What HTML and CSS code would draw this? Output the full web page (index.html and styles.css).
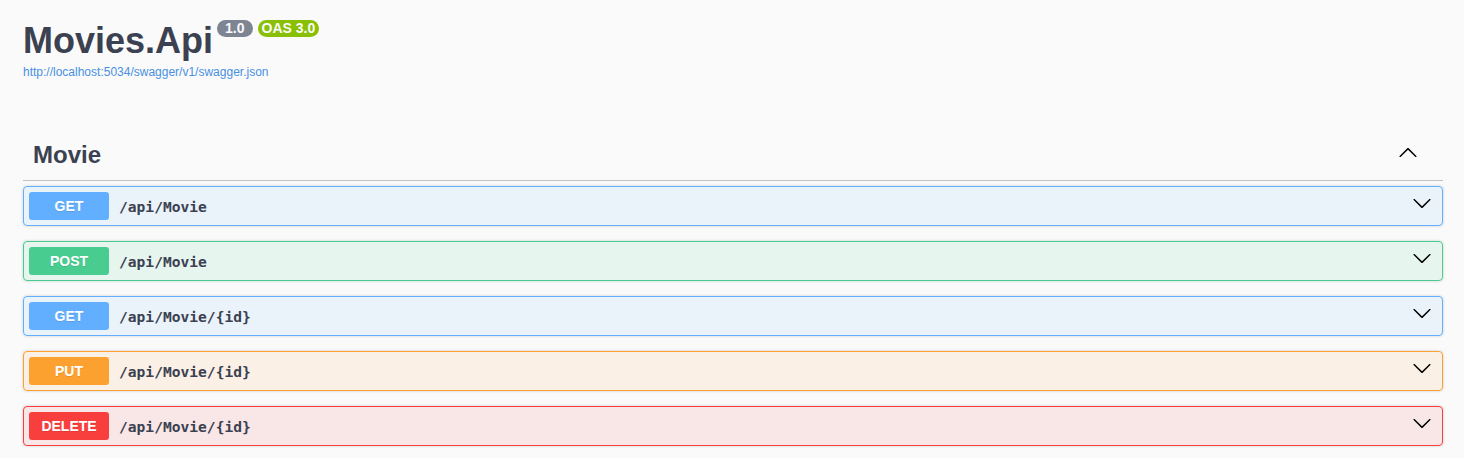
FILE: index.html
```html
<!DOCTYPE html>
<html lang="en">
<head>
<meta charset="utf-8">
<title>Movies.Api</title>
<link rel="stylesheet" href="styles.css">
</head>
<body>
<div class="wrapper">
  <header class="info">
    <h2 class="title">
      <span class="title-text">Movies.Api</span>
      <span class="badge badge-version">1.0</span>
      <span class="badge badge-oas">OAS 3.0</span>
    </h2>
    <a class="spec-link" href="#">http://localhost:5034/swagger/v1/swagger.json</a>
  </header>

  <section class="tag-section">
    <h3 class="tag-header">
      <span class="tag-name">Movie</span>
      <svg class="tag-arrow" width="20" height="20" viewBox="0 0 20 20" aria-hidden="true"><path d="M17.418 14.908c.272.268.709.268.979 0s.271-.701 0-.969l-7.908-7.83c-.27-.268-.707-.268-.979 0l-7.908 7.83c-.27.268-.27.701 0 .969.271.268.709.268.979 0L10 7.767l7.418 7.141z"/></svg>
    </h3>

    <div class="opblock opblock-get">
      <span class="method">GET</span>
      <span class="path">/api/Movie</span>
      <svg class="op-arrow" width="20" height="20" viewBox="0 0 20 20" aria-hidden="true"><path d="M17.418 6.109c.272-.268.709-.268.979 0s.271.701 0 .969l-7.908 7.83c-.27.268-.707.268-.979 0l-7.908-7.83c-.27-.268-.27-.701 0-.969.271-.268.709-.268.979 0L10 13.25l7.418-7.141z"/></svg>
    </div>
    <div class="opblock opblock-post">
      <span class="method">POST</span>
      <span class="path">/api/Movie</span>
      <svg class="op-arrow" width="20" height="20" viewBox="0 0 20 20" aria-hidden="true"><path d="M17.418 6.109c.272-.268.709-.268.979 0s.271.701 0 .969l-7.908 7.83c-.27.268-.707.268-.979 0l-7.908-7.83c-.27-.268-.27-.701 0-.969.271-.268.709-.268.979 0L10 13.25l7.418-7.141z"/></svg>
    </div>
    <div class="opblock opblock-get">
      <span class="method">GET</span>
      <span class="path">/api/Movie/{id}</span>
      <svg class="op-arrow" width="20" height="20" viewBox="0 0 20 20" aria-hidden="true"><path d="M17.418 6.109c.272-.268.709-.268.979 0s.271.701 0 .969l-7.908 7.83c-.27.268-.707.268-.979 0l-7.908-7.83c-.27-.268-.27-.701 0-.969.271-.268.709-.268.979 0L10 13.25l7.418-7.141z"/></svg>
    </div>
    <div class="opblock opblock-put">
      <span class="method">PUT</span>
      <span class="path">/api/Movie/{id}</span>
      <svg class="op-arrow" width="20" height="20" viewBox="0 0 20 20" aria-hidden="true"><path d="M17.418 6.109c.272-.268.709-.268.979 0s.271.701 0 .969l-7.908 7.83c-.27.268-.707.268-.979 0l-7.908-7.83c-.27-.268-.27-.701 0-.969.271-.268.709-.268.979 0L10 13.25l7.418-7.141z"/></svg>
    </div>
    <div class="opblock opblock-delete">
      <span class="method">DELETE</span>
      <span class="path">/api/Movie/{id}</span>
      <svg class="op-arrow" width="20" height="20" viewBox="0 0 20 20" aria-hidden="true"><path d="M17.418 6.109c.272-.268.709-.268.979 0s.271.701 0 .969l-7.908 7.83c-.27.268-.707.268-.979 0l-7.908-7.83c-.27-.268-.27-.701 0-.969.271-.268.709-.268.979 0L10 13.25l7.418-7.141z"/></svg>
    </div>
  </section>
</div>
</body>
</html>
```

FILE: styles.css
```css
html, body {
  margin: 0;
  padding: 0;
  background: #fafafa;
}

body {
  font-family: "Liberation Sans", Arial, sans-serif;
  color: #3b4151;
}

.wrapper {
  padding: 20px 21px 0 23px;
}

.info {
  display: flex;
  flex-direction: column;
  align-items: flex-start;
}

.title {
  display: flex;
  align-items: flex-start;
  margin: 0;
  font-size: 36px;
  line-height: 41px;
  font-weight: 700;
  color: #3b4151;
}

.title-text {
  display: block;
}

.badge {
  display: block;
  margin-left: 5px;
  font-size: 14px;
  line-height: 13px;
  font-weight: 700;
  color: #fafafa;
  border-radius: 57px;
  padding: 2px 4px;
}

.badge-version {
  background: #7d8492;
  padding: 2px 8px;
  margin-left: 4px;
}

.badge-oas {
  background: #89bf04;
}

.spec-link {
  margin-top: 4px;
  font-size: 12px;
  color: #4990e2;
  text-decoration: none;
}

.tag-section {
  margin-top: 51px;
}

.tag-header {
  display: flex;
  align-items: flex-start;
  justify-content: space-between;
  margin: 0 0 5px;
  padding: 10px 20px 11px 10px;
  font-size: 24px;
  line-height: 29px;
  font-weight: 700;
  border-bottom: 1px solid rgba(59, 65, 81, 0.3);
}

.tag-arrow {
  margin-top: 2px;
  margin-right: 5px;
  fill: #000;
}

.opblock {
  display: flex;
  align-items: center;
  margin: 0 0 15px;
  padding: 5px;
  border: 1px solid;
  border-radius: 4px;
  box-shadow: 0 0 3px rgba(0, 0, 0, 0.19);
}

.method {
  min-width: 80px;
  padding: 6px 0;
  font-size: 14px;
  line-height: 16px;
  font-weight: 700;
  text-align: center;
  color: #fff;
  border-radius: 3px;
  text-shadow: 0 1px 0 rgba(0, 0, 0, 0.1);
}

.path {
  flex: 1;
  padding: 0 10px;
  font-family: "DejaVu Sans Mono", "Liberation Mono", monospace;
  font-size: 14.6px;
  font-weight: 700;
  color: #3b4151;
}

.op-arrow {
  align-self: flex-start;
  margin-top: 1px;
  margin-right: 5px;
  fill: #000;
}

.opblock-get { border-color: #61affe; background: rgba(97, 175, 254, 0.1); }
.opblock-get .method { background: #61affe; }

.opblock-post { border-color: #49cc90; background: rgba(73, 204, 144, 0.1); }
.opblock-post .method { background: #49cc90; }

.opblock-put { border-color: #fca130; background: rgba(252, 161, 48, 0.1); }
.opblock-put .method { background: #fca130; }

.opblock-delete { border-color: #f93e3e; background: rgba(249, 62, 62, 0.1); }
.opblock-delete .method { background: #f93e3e; }
```
